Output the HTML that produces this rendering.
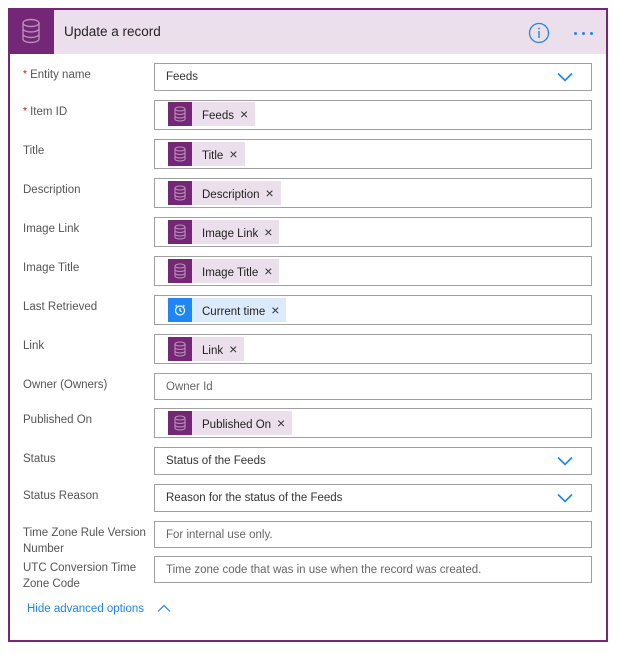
<!DOCTYPE html>
<html><head><meta charset="utf-8"><style>
*{box-sizing:border-box;margin:0;padding:0}
body{width:620px;height:655px;background:#fff;font-family:"Liberation Sans",sans-serif;position:relative;overflow:hidden}
.card{position:absolute;left:8px;top:8px;width:600px;height:634px;border:2px solid #742774}
.hdr{position:absolute;left:8px;top:8px;width:600px;height:46px;background:#ebdfeb}
.hicon{position:absolute;left:8px;top:8px;width:46px;height:46px;background:#742774}
.title{position:absolute;left:64px;top:24px;font-size:13.5px;color:#222}
.lbl{position:absolute;left:23px;font-size:11.5px;color:#555;line-height:16px}
.lbl .req{color:#c00;font-size:10px;vertical-align:top}
.box{position:absolute;left:154px;width:438px;border:1px solid #a0a0a0;background:#fff}
.txt{position:absolute;left:11px;font-size:11.5px;color:#333}
.ph{color:#666}
.tok{position:absolute;left:13px;height:24px;background:#ebdfeb;font-size:11.5px;color:#222;line-height:24px;padding-left:34px;padding-right:7px}
.tok.blue{background:#dceafc}
.tok .ic{position:absolute;left:0;top:0;width:24px;height:24px;background:#742774}
.tok.blue .ic{background:#1e86f5}
.tok .x{margin-left:6px;font-size:14px;color:#333}
.chev{position:absolute;right:18px;top:8px}
</style></head><body>
<div class="hdr"></div>
<div class="card"></div>
<div class="hicon"><svg width="46" height="46" viewBox="0 0 46 46" fill="none" stroke="#b98fb9" stroke-width="1.4"><ellipse cx="23" cy="15" rx="8" ry="3.5"/><path d="M15 15v16c0 2 3.6 3.5 8 3.5s8-1.5 8-3.5V15M15 20.5c0 2 3.6 3.5 8 3.5s8-1.5 8-3.5M15 26c0 2 3.6 3.5 8 3.5s8-1.5 8-3.5"/></svg></div>
<div class="title">Update a record</div>
<svg style="position:absolute;left:528px;top:22px" width="22" height="22" viewBox="0 0 22 22"><circle cx="11" cy="11" r="9.5" fill="none" stroke="#1e86e5" stroke-width="1.3"/><rect x="10.3" y="9" width="1.4" height="7" fill="#1e86e5"/><circle cx="11" cy="6.5" r="0.9" fill="#1e86e5"/></svg>
<div style="position:absolute;left:574px;top:32px;width:3px;height:3px;background:#1e86e5;border-radius:2px"></div>
<div style="position:absolute;left:582px;top:32px;width:3px;height:3px;background:#1e86e5;border-radius:2px"></div>
<div style="position:absolute;left:590px;top:32px;width:3px;height:3px;background:#1e86e5;border-radius:2px"></div>

<div class="lbl" style="top:67px"><span class="req">*</span> Entity name</div>
<div class="box" style="top:63px;height:28px"><div class="txt" style="top:7px">Feeds</div><svg class="chev" width="16" height="10" viewBox="0 0 16 10"><path d="M1 1.5l7 7 7-7" fill="none" stroke="#1e86e5" stroke-width="1.6"/></svg></div>

<div class="lbl" style="top:104px"><span class="req">*</span> Item ID</div>
<div class="box" style="top:100px;height:30px"><div class="tok" style="top:1px"><span class="ic"><svg width="24" height="24" viewBox="0 0 24 24" fill="none" stroke="#b98fb9" stroke-width="1.1"><ellipse cx="12" cy="7" rx="5" ry="2"/><path d="M7 7v10c0 1.1 2.2 2 5 2s5-.9 5-2V7M7 10.5c0 1.1 2.2 2 5 2s5-.9 5-2M7 14c0 1.1 2.2 2 5 2s5-.9 5-2"/></svg></span>Feeds<span class="x">×</span></div></div>

<div class="lbl" style="top:143px">Title</div>
<div class="box" style="top:139px;height:30px"><div class="tok" style="top:2px"><span class="ic"><svg width="24" height="24" viewBox="0 0 24 24" fill="none" stroke="#b98fb9" stroke-width="1.1"><ellipse cx="12" cy="7" rx="5" ry="2"/><path d="M7 7v10c0 1.1 2.2 2 5 2s5-.9 5-2V7M7 10.5c0 1.1 2.2 2 5 2s5-.9 5-2M7 14c0 1.1 2.2 2 5 2s5-.9 5-2"/></svg></span>Title<span class="x">×</span></div></div>

<div class="lbl" style="top:182px">Description</div>
<div class="box" style="top:178px;height:30px"><div class="tok" style="top:2px"><span class="ic"><svg width="24" height="24" viewBox="0 0 24 24" fill="none" stroke="#b98fb9" stroke-width="1.1"><ellipse cx="12" cy="7" rx="5" ry="2"/><path d="M7 7v10c0 1.1 2.2 2 5 2s5-.9 5-2V7M7 10.5c0 1.1 2.2 2 5 2s5-.9 5-2M7 14c0 1.1 2.2 2 5 2s5-.9 5-2"/></svg></span>Description<span class="x">×</span></div></div>

<div class="lbl" style="top:221px">Image Link</div>
<div class="box" style="top:217px;height:30px"><div class="tok" style="top:2px"><span class="ic"><svg width="24" height="24" viewBox="0 0 24 24" fill="none" stroke="#b98fb9" stroke-width="1.1"><ellipse cx="12" cy="7" rx="5" ry="2"/><path d="M7 7v10c0 1.1 2.2 2 5 2s5-.9 5-2V7M7 10.5c0 1.1 2.2 2 5 2s5-.9 5-2M7 14c0 1.1 2.2 2 5 2s5-.9 5-2"/></svg></span>Image Link<span class="x">×</span></div></div>

<div class="lbl" style="top:260px">Image Title</div>
<div class="box" style="top:256px;height:30px"><div class="tok" style="top:2px"><span class="ic"><svg width="24" height="24" viewBox="0 0 24 24" fill="none" stroke="#b98fb9" stroke-width="1.1"><ellipse cx="12" cy="7" rx="5" ry="2"/><path d="M7 7v10c0 1.1 2.2 2 5 2s5-.9 5-2V7M7 10.5c0 1.1 2.2 2 5 2s5-.9 5-2M7 14c0 1.1 2.2 2 5 2s5-.9 5-2"/></svg></span>Image Title<span class="x">×</span></div></div>

<div class="lbl" style="top:299px">Last Retrieved</div>
<div class="box" style="top:295px;height:30px"><div class="tok blue" style="top:2px"><span class="ic"><svg width="24" height="24" viewBox="0 0 24 24" fill="none" stroke="#fff" stroke-width="1.2"><circle cx="12" cy="12.5" r="4.5"/><path d="M12 10v2.7l1.6 1M7.5 8.5l1.5-1.5M16.5 8.5l-1.5-1.5"/></svg></span>Current time<span class="x">×</span></div></div>

<div class="lbl" style="top:338px">Link</div>
<div class="box" style="top:334px;height:30px"><div class="tok" style="top:2px"><span class="ic"><svg width="24" height="24" viewBox="0 0 24 24" fill="none" stroke="#b98fb9" stroke-width="1.1"><ellipse cx="12" cy="7" rx="5" ry="2"/><path d="M7 7v10c0 1.1 2.2 2 5 2s5-.9 5-2V7M7 10.5c0 1.1 2.2 2 5 2s5-.9 5-2M7 14c0 1.1 2.2 2 5 2s5-.9 5-2"/></svg></span>Link<span class="x">×</span></div></div>

<div class="lbl" style="top:377px">Owner (Owners)</div>
<div class="box" style="top:373px;height:27px"><div class="txt ph" style="top:7px">Owner Id</div></div>

<div class="lbl" style="top:412px">Published On</div>
<div class="box" style="top:408px;height:30px"><div class="tok" style="top:2px"><span class="ic"><svg width="24" height="24" viewBox="0 0 24 24" fill="none" stroke="#b98fb9" stroke-width="1.1"><ellipse cx="12" cy="7" rx="5" ry="2"/><path d="M7 7v10c0 1.1 2.2 2 5 2s5-.9 5-2V7M7 10.5c0 1.1 2.2 2 5 2s5-.9 5-2M7 14c0 1.1 2.2 2 5 2s5-.9 5-2"/></svg></span>Published On<span class="x">×</span></div></div>

<div class="lbl" style="top:451px">Status</div>
<div class="box" style="top:447px;height:28px"><div class="txt" style="top:7px">Status of the Feeds</div><svg class="chev" width="16" height="10" viewBox="0 0 16 10"><path d="M1 1.5l7 7 7-7" fill="none" stroke="#1e86e5" stroke-width="1.6"/></svg></div>

<div class="lbl" style="top:488px">Status Reason</div>
<div class="box" style="top:484px;height:28px"><div class="txt" style="top:7px">Reason for the status of the Feeds</div><svg class="chev" width="16" height="10" viewBox="0 0 16 10"><path d="M1 1.5l7 7 7-7" fill="none" stroke="#1e86e5" stroke-width="1.6"/></svg></div>

<div class="lbl" style="top:525px">Time Zone Rule Version<br>Number</div>
<div class="box" style="top:521px;height:27px"><div class="txt ph" style="top:7px">For internal use only.</div></div>

<div class="lbl" style="top:560px">UTC Conversion Time<br>Zone Code</div>
<div class="box" style="top:556px;height:27px"><div class="txt ph" style="top:7px">Time zone code that was in use when the record was created.</div></div>

<div style="position:absolute;left:27px;top:603px;font-size:11.5px;color:#1e86e5">Hide advanced options</div>
<svg style="position:absolute;left:157px;top:604px" width="14" height="9" viewBox="0 0 14 9"><path d="M1 7.5l6-6 6 6" fill="none" stroke="#1e86e5" stroke-width="1.2"/></svg>
</body></html>
